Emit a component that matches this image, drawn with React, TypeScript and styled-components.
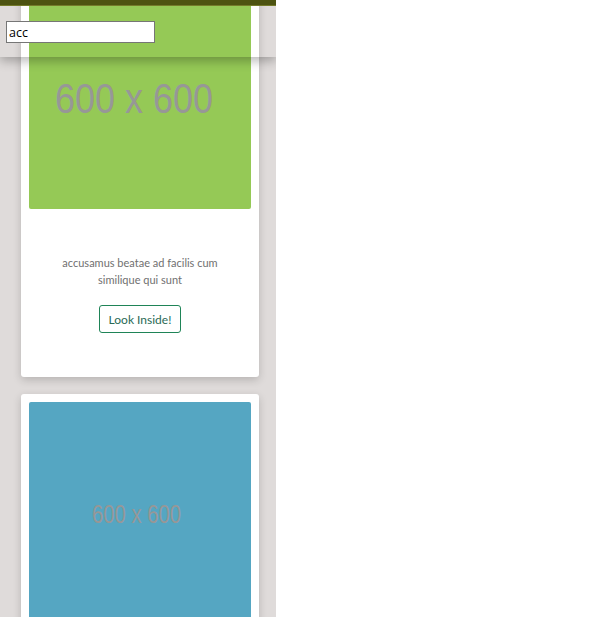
import React from "react";
import styled, { createGlobalStyle } from "styled-components";

const Global = createGlobalStyle`
  html, body { margin: 0; padding: 0; background: #ffffff; }
  body { font-family: Lato, "Liberation Sans", sans-serif; overflow: hidden; }
`;

const Page = styled.div`
  position: relative;
  width: 276px;
  height: 617px;
  background: #dfdbda;
  overflow: hidden;
`;

const Header = styled.header`
  position: absolute;
  top: 0;
  left: 0;
  right: 0;
  height: 52px;
  border-top: 5px solid #4d5311;
  box-shadow: 0 4px 10px rgba(0, 0, 0, 0.28);
  z-index: 2;
  &::before {
    content: "";
    display: block;
    height: 1px;
    background: #747a2a;
  }
`;

const Search = styled.input`
  position: absolute;
  left: 6px;
  top: 16px;
  box-sizing: border-box;
  width: 149px;
  height: 22px;
  margin: 0;
  padding: 1px 2px;
  border: 1px solid #767676;
  background: #fff;
  font-family: "Open Sans", "Liberation Sans", Arial, sans-serif;
  font-size: 12.5px;
  color: #000;
  outline: none;
`;

const List = styled.main`
  display: flex;
  flex-direction: column;
  gap: 17px;
  padding: 0 17px 0 21px;
  margin-top: -21px;
`;

const Card = styled.article`
  background: #fff;
  border-radius: 3px;
  padding: 8px;
  box-shadow: 0 3px 8px rgba(0, 0, 0, 0.18);
  display: flex;
  flex-direction: column;
`;

const Thumb = styled.svg`
  display: block;
  width: 222px;
  height: 222px;
  border-radius: 2px;
`;

const Body = styled.div`
  display: flex;
  flex-direction: column;
  align-items: center;
  padding: 45px 20px 36px;
`;

const Blurb = styled.p`
  margin: 0;
  text-align: center;
  font-size: 11px;
  line-height: 17px;
  color: #707070;
`;

const Button = styled.button`
  margin-top: 17px;
  height: 28px;
  padding: 0 9px;
  background: #fff;
  border: 1px solid #1f8457;
  border-radius: 3px;
  font-family: Lato, "Liberation Sans", sans-serif;
  font-size: 12px;
  color: #2a6a55;
  cursor: pointer;
`;

type Item = {
  color: string;
  text?: string;
  big: { x: number; y: number; len: number; size: number };
};

const items: Item[] = [
  {
    color: "#95c956",
    text: "accusamus beatae ad facilis cum similique qui sunt",
    big: { x: 26, y: 126, len: 158, size: 43 },
  },
  {
    color: "#55a6c2",
    big: { x: 63, y: 121, len: 89, size: 25 },
  },
];

function Placeholder({ color, big }: Item) {
  return (
    <Thumb viewBox="0 0 222 222">
      <rect width="222" height="222" fill={color} />
      <text
        x={big.x}
        y={big.y}
        textLength={big.len}
        lengthAdjust="spacingAndGlyphs"
        fontFamily="Liberation Sans, Arial, sans-serif"
        fontSize={big.size}
        fill="#979797"
      >
        600 x 600
      </text>
    </Thumb>
  );
}

export default function App() {
  return (
    <>
      <Global />
      <Page>
        <Header>
          <Search defaultValue="acc" />
        </Header>
        <List>
          {items.map((it, i) => (
            <Card key={i}>
              <Placeholder {...it} />
              {it.text && (
                <Body>
                  <Blurb>{it.text}</Blurb>
                  <Button>Look Inside!</Button>
                </Body>
              )}
            </Card>
          ))}
        </List>
      </Page>
    </>
  );
}
